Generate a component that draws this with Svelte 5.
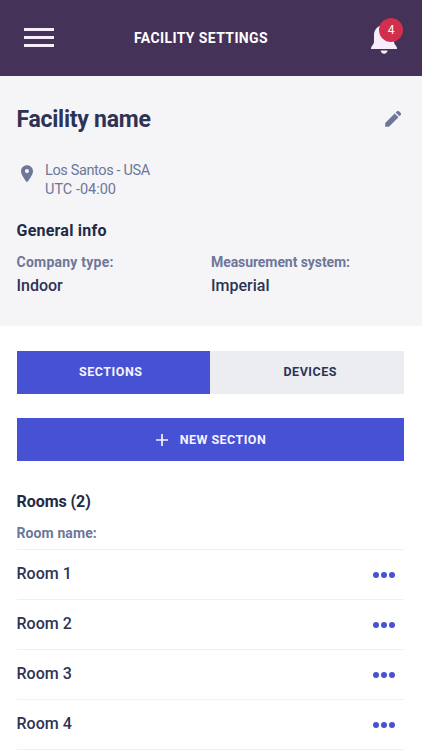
<script>
  const rooms = ['Room 1', 'Room 2', 'Room 3', 'Room 4'];
</script>

<div class="screen">
  <header>
    <button class="menu" aria-label="Menu"><i></i><i></i><i></i></button>
    <h1>FACILITY SETTINGS</h1>
    <button class="bell" aria-label="Notifications">
      <svg width="28" height="30" viewBox="0 0 28 30" fill="#f5edfc">
        <path d="M14 0C8 0 4 4.700 4 10v7c0 2.400-3 4.500-3 6v1h26v-1c0-1.500-3-3.600-3-6v-7C24 4.700 20 0 14 0z" />
        <path d="M10.700 25.500h6.800c0 1.900-1.500 3.200-3.400 3.200s-3.400-1.300-3.400-3.200z" />
      </svg>
      <span class="badge">4</span>
    </button>
  </header>

  <section class="info">
    <div class="title">
      <h2>Facility name</h2>
      <svg width="18" height="18" viewBox="0 0 18 18" fill="#6d7799">
        <path d="M1.200 16.800v-3.800L10.700 3.500l3.800 3.800-9.500 9.500z" />
        <path d="M11.700 2.600l1.300-1.300c.7-.7 1.400-.7 2 0l1.700 1.700c.6.600.6 1.300 0 2l-1.300 1.300z" />
      </svg>
    </div>
    <div class="place">
      <svg width="12" height="18" viewBox="0 0 12 18" fill="#6d7799">
        <path fill-rule="evenodd" d="M6 .3C2.700.3 0 2.900 0 6.200c0 4.300 6 11 6 11s6-6.700 6-11C12 2.900 9.300.3 6 .3zM6 8.200a2.100 2.100 0 1 1 0-4.200 2.100 2.100 0 0 1 0 4.200z" />
      </svg>
      <p><span class="city">Los Santos - USA</span><br /><span>UTC -04:00</span></p>
    </div>
    <h3 class="general">General info</h3>
    <dl>
      <div><dt class="company">Company type:</dt><dd>Indoor</dd></div>
      <div><dt class="measure">Measurement system:</dt><dd>Imperial</dd></div>
    </dl>
  </section>

  <main>
    <div class="tabs">
      <button class="active">SECTIONS</button>
      <button>DEVICES</button>
    </div>
    <button class="new">
      <svg width="12" height="12" viewBox="0 0 12 12" stroke="#f6f3ff" stroke-width="1.700"><path d="M6 0v12M0 6h12" /></svg>
      <span>NEW SECTION</span>
    </button>
    <h3 class="rooms">Rooms (2)</h3>
    <div class="label">Room name:</div>
    <ul>
      {#each rooms as room}
        <li>
          <span>{room}</span>
          <button class="dots" aria-label="Options"><i></i><i></i><i></i></button>
        </li>
      {/each}
    </ul>
  </main>
</div>

<style>
  .screen {
    width: 422px;
    height: 750px;
    overflow: hidden;
    background: #fff;
    color: #2d3354;
    font-family: Roboto, 'Open Sans', sans-serif;
    font-size: 16px;
  }
  h1, h2, h3, p, dl, dd, ul { margin: 0; padding: 0; }
  button {
    box-sizing: border-box;
    margin: 0;
    padding: 0;
    border: 0;
    background: none;
    font: inherit;
    color: inherit;
  }
  svg { display: block; flex: none; }
  header {
    box-sizing: border-box;
    height: 76px;
    padding: 0 18px 0 24px;
    display: flex;
    align-items: center;
    background: #443259;
  }
  .menu { display: flex; flex-direction: column; gap: 5px; width: 30px; margin-top: -1px; }
  .menu i { height: 3px; background: #f5edfc; }
  h1 {
    margin-left: 80px;
    font-size: 14px;
    line-height: 20px;
    font-weight: 700;
    letter-spacing: 0.380px;
    color: #fff;
    white-space: nowrap;
  }
  .bell { position: relative; width: 34px; height: 30px; margin-top: 4px; margin-left: auto; }
  .badge {
    position: absolute;
    left: 9px;
    top: -7px;
    width: 24px;
    height: 24px;
    border-radius: 50%;
    background: #d12f4b;
    color: #fff;
    font-size: 12px;
    line-height: 24px;
    text-align: center;
  }
  .info {
    box-sizing: border-box;
    height: 250px;
    padding: 29px 20px 0 16.500px;
    background: #f5f5f8;
  }
  .title { display: flex; justify-content: space-between; align-items: center; height: 30px; }
  .title svg { margin-top: -2px; }
  h2 { font-size: 23px; line-height: 30px; font-weight: 700; letter-spacing: -0.250px; }
  .place {
    display: flex;
    gap: 12px;
    margin-top: 26px;
    padding-left: 4.500px;
    color: #6d7799;
  }
  .place svg { margin-top: 4px; }
  .place p { font-size: 14.500px; line-height: 19px; }
  .city { letter-spacing: -0.370px; }
  h3 { font-size: 16px; line-height: 22px; font-weight: 700; color: #232a44; }
  .general { margin-top: 21px; letter-spacing: 0.220px; }
  dl { display: flex; margin-top: 10px; }
  dl div { width: 194.500px; flex: none; white-space: nowrap; }
  dt, .label { font-size: 14px; line-height: 20px; font-weight: 700; color: #6d7799; }
  .company { letter-spacing: 0.240px; }
  .measure { letter-spacing: -0.080px; }
  dd { margin-top: 3px; line-height: 22px; font-weight: 500; }
  main { padding: 25px 18.500px 0 16.500px; }
  .tabs { display: flex; height: 43px; }
  .tabs button { width: 50%; background: #ecedf1; padding-bottom: 2px; }
  .tabs button, .new { font-size: 12.500px; font-weight: 700; letter-spacing: 0.550px; }
  .tabs .active, .new { background: #4751d3; color: #f6f3ff; }
  .tabs .active { padding-right: 5px; }
  .tabs button:last-child { padding-left: 7px; }
  .new {
    display: flex;
    justify-content: center;
    align-items: center;
    gap: 12px;
    width: 100%;
    height: 43px;
    margin-top: 24px;
    padding-left: 2px;
    letter-spacing: 0.450px;
  }
  .rooms { margin-top: 30px; letter-spacing: -0.050px; }
  .label { margin-top: 10px; letter-spacing: 0.100px; }
  ul { list-style: none; margin-top: 6px; border-top: 1px solid #f0f0f3; }
  li {
    box-sizing: border-box;
    height: 50px;
    padding-right: 8.500px;
    display: flex;
    justify-content: space-between;
    align-items: center;
    border-bottom: 1px solid #f0f0f3;
    font-weight: 500;
  }
  li span { padding-bottom: 2px; }
  .dots { display: flex; gap: 2px; }
  .dots i { width: 6px; height: 6px; border-radius: 50%; background: #4751d3; }
</style>
